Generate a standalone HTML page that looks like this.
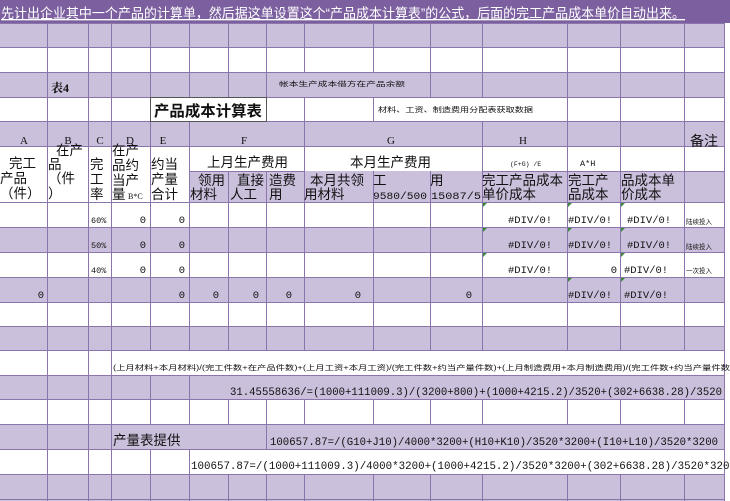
<!DOCTYPE html>
<html><head><meta charset="utf-8"><style>
html,body{margin:0;padding:0;background:#fff;overflow:hidden}
svg{display:block}
text{font-family:"Liberation Sans","Noto Sans CJK SC",sans-serif;fill:#111}
.m,.m text{font-family:"Liberation Mono","Noto Sans CJK SC",monospace}
.s,.s text{font-family:"Liberation Serif","Noto Serif CJK SC",serif}
</style></head><body>
<svg width="730" height="501" viewBox="0 0 730 501" xmlns="http://www.w3.org/2000/svg">
<rect x="0" y="0" width="730" height="501" fill="#fff"/>
<rect x="0" y="0" width="730" height="23" fill="#7b5f9f"/>
<text x="1" y="18" font-size="13.5" style="fill:#fff" text-decoration="underline" textLength="684" lengthAdjust="spacingAndGlyphs">先计出企业其中一个产品的计算单，然后据这单设置这个“产品成本计算表”的公式，后面的完工产品成本单价自动出来。</text>
<g fill="#cbc0dc">
<rect x="0" y="23" width="725" height="24"/>
<rect x="0" y="72" width="725" height="25"/>
<rect x="0" y="121" width="725" height="25"/>
<rect x="189" y="171" width="536" height="31"/>
<rect x="0" y="227" width="725" height="25"/>
<rect x="0" y="277" width="725" height="25"/>
<rect x="0" y="326" width="725" height="24"/>
<rect x="0" y="375" width="725" height="24"/>
<rect x="0" y="424" width="725" height="25"/>
<rect x="0" y="474" width="725" height="27"/>
</g>
<g stroke="#8a76ad" stroke-width="1">
<line x1="0" y1="23.5" x2="725" y2="23.5"/>
<line x1="0" y1="47.5" x2="725" y2="47.5"/>
<line x1="0" y1="72.5" x2="725" y2="72.5"/>
<line x1="0" y1="97.5" x2="725" y2="97.5"/>
<line x1="0" y1="121.5" x2="725" y2="121.5"/>
<line x1="0" y1="146.5" x2="725" y2="146.5"/>
<line x1="189" y1="171.5" x2="304" y2="171.5"/>
<line x1="482" y1="171.5" x2="725" y2="171.5"/>
<line x1="0" y1="202.5" x2="725" y2="202.5"/>
<line x1="0" y1="227.5" x2="725" y2="227.5"/>
<line x1="0" y1="252.5" x2="725" y2="252.5"/>
<line x1="0" y1="277.5" x2="725" y2="277.5"/>
<line x1="0" y1="302.5" x2="725" y2="302.5"/>
<line x1="0" y1="326.5" x2="725" y2="326.5"/>
<line x1="0" y1="350.5" x2="725" y2="350.5"/>
<line x1="0" y1="375.5" x2="725" y2="375.5"/>
<line x1="0" y1="399.5" x2="725" y2="399.5"/>
<line x1="0" y1="424.5" x2="725" y2="424.5"/>
<line x1="0" y1="449.5" x2="725" y2="449.5"/>
<line x1="0" y1="474.5" x2="725" y2="474.5"/>
<line x1="0" y1="499.5" x2="725" y2="499.5"/>
</g>
<g stroke="#8a76ad" stroke-width="1">
<line x1="47.5" y1="23" x2="47.5" y2="501"/>
<line x1="88.5" y1="23" x2="88.5" y2="501"/>
<line x1="111.5" y1="23" x2="111.5" y2="501"/>
<line x1="150.5" y1="23" x2="150.5" y2="97"/><line x1="150.5" y1="121" x2="150.5" y2="351"/><line x1="150.5" y1="375" x2="150.5" y2="425"/><line x1="150.5" y1="449" x2="150.5" y2="501"/>
<line x1="189.5" y1="23" x2="189.5" y2="97"/><line x1="189.5" y1="121" x2="189.5" y2="351"/><line x1="189.5" y1="375" x2="189.5" y2="425"/><line x1="189.5" y1="449" x2="189.5" y2="501"/>
<line x1="228.5" y1="23" x2="228.5" y2="97"/><line x1="228.5" y1="171" x2="228.5" y2="351"/><line x1="228.5" y1="399" x2="228.5" y2="425"/><line x1="228.5" y1="474" x2="228.5" y2="501"/>
<line x1="266.5" y1="23" x2="266.5" y2="121"/><line x1="266.5" y1="171" x2="266.5" y2="351"/><line x1="266.5" y1="399" x2="266.5" y2="449"/><line x1="266.5" y1="474" x2="266.5" y2="501"/>
<line x1="304.5" y1="23" x2="304.5" y2="72"/><line x1="304.5" y1="97" x2="304.5" y2="351"/><line x1="304.5" y1="399" x2="304.5" y2="425"/><line x1="304.5" y1="474" x2="304.5" y2="501"/>
<line x1="373.5" y1="23" x2="373.5" y2="72"/><line x1="373.5" y1="97" x2="373.5" y2="121"/><line x1="373.5" y1="171" x2="373.5" y2="351"/><line x1="373.5" y1="399" x2="373.5" y2="425"/><line x1="373.5" y1="474" x2="373.5" y2="501"/>
<line x1="430.5" y1="23" x2="430.5" y2="97"/><line x1="430.5" y1="171" x2="430.5" y2="351"/><line x1="430.5" y1="399" x2="430.5" y2="425"/><line x1="430.5" y1="474" x2="430.5" y2="501"/>
<line x1="482.5" y1="23" x2="482.5" y2="97"/><line x1="482.5" y1="121" x2="482.5" y2="351"/><line x1="482.5" y1="399" x2="482.5" y2="425"/><line x1="482.5" y1="474" x2="482.5" y2="501"/>
<line x1="567.5" y1="23" x2="567.5" y2="351"/><line x1="567.5" y1="399" x2="567.5" y2="425"/><line x1="567.5" y1="474" x2="567.5" y2="501"/>
<line x1="620.5" y1="23" x2="620.5" y2="351"/><line x1="620.5" y1="399" x2="620.5" y2="425"/><line x1="620.5" y1="474" x2="620.5" y2="501"/>
<line x1="684.5" y1="23" x2="684.5" y2="351"/><line x1="684.5" y1="399" x2="684.5" y2="425"/><line x1="684.5" y1="474" x2="684.5" y2="501"/>
<line x1="724.5" y1="23" x2="724.5" y2="501"/>
</g>
<text x="51" y="92" font-size="12" font-weight="bold" class="s">表4</text>
<text x="279" y="86" font-size="6.5" textLength="126" lengthAdjust="spacingAndGlyphs">帐本生产成本借方在产品余额</text>
<rect x="150.5" y="97.5" width="116" height="24" fill="#fff" stroke="#555"/>
<text x="154" y="116" font-size="15" font-weight="bold" textLength="108" lengthAdjust="spacingAndGlyphs">产品成本计算表</text>
<text x="378" y="112" font-size="7" textLength="155" lengthAdjust="spacingAndGlyphs">材料、工资、制造费用分配表获取数据</text>
<g font-size="11" text-anchor="middle" class="s">
<text x="24" y="144">A</text><text x="68" y="144">B</text><text x="100" y="144">C</text>
<text x="130" y="144">D</text><text x="163" y="144">E</text><text x="244" y="144">F</text>
<text x="391" y="144">G</text><text x="523" y="144">H</text>
</g>
<text x="690" y="146" font-size="14">备注</text>
<g font-size="13.5">
<text x="9" y="168">完工</text><text x="0" y="183">产品</text><text x="0" y="198">（件）</text>
<text x="56" y="155">在产</text><text x="48" y="169">品</text><text x="48" y="183">（件</text><text x="48" y="198">）</text>
<text x="90" y="169">完</text><text x="90" y="184">工</text><text x="90" y="199">率</text>
<text x="112" y="155">在产</text><text x="112" y="170">品约</text><text x="112" y="185">当产</text><text x="112" y="199">量</text>
<text x="151" y="169">约当</text><text x="151" y="184">产量</text><text x="151" y="199">合计</text>
<text x="207" y="167">上月生产费用</text>
<text x="350" y="167">本月生产费用</text>
<text x="198" y="185">领用</text><text x="190" y="199">材料</text>
<text x="237" y="185">直接</text><text x="230" y="199">人工</text>
<text x="269" y="185">造费</text><text x="269" y="199">用</text>
<text x="310" y="185">本月共领</text><text x="304" y="199">用材料</text>
<text x="373" y="185">工</text><text x="430" y="185">用</text>
<text x="482" y="185">完工产品成本</text><text x="482" y="199">单价成本</text>
<text x="568" y="185">完工产</text><text x="568" y="199">品成本</text>
<text x="621" y="185">品成本单</text><text x="621" y="199">价成本</text>
</g>
<text x="128" y="199" font-size="8" class="s">B*C</text>
<text x="373" y="199" font-size="10.5" class="m" textLength="54" lengthAdjust="spacingAndGlyphs">9580/500</text>
<text x="431" y="199" font-size="10.5" class="m" textLength="50" lengthAdjust="spacingAndGlyphs">15087/5</text>
<text x="510" y="166" font-size="6.5" class="m">(F+G) /E</text>
<text x="580" y="166" font-size="8.5" class="m">A*H</text>
<g font-size="10.5" class="m">
<text x="91" y="223" font-size="8.5">60%</text><text x="91" y="248" font-size="8.5">50%</text><text x="91" y="273" font-size="8.5">40%</text>
<text x="146" y="223" text-anchor="end">0</text><text x="185" y="223" text-anchor="end">0</text>
<text x="146" y="248" text-anchor="end">0</text><text x="185" y="248" text-anchor="end">0</text>
<text x="146" y="273" text-anchor="end">0</text><text x="185" y="273" text-anchor="end">0</text>
<text x="44" y="298" text-anchor="end">0</text><text x="185" y="298" text-anchor="end">0</text>
<text x="219" y="298" text-anchor="end">0</text><text x="259" y="298" text-anchor="end">0</text><text x="292" y="298" text-anchor="end">0</text>
<text x="361" y="298" text-anchor="end">0</text><text x="472" y="298" text-anchor="end">0</text>
<text x="508" y="223">#DIV/0!</text><text x="568" y="223">#DIV/0!</text><text x="627" y="223">#DIV/0!</text>
<text x="508" y="248">#DIV/0!</text><text x="568" y="248">#DIV/0!</text><text x="627" y="248">#DIV/0!</text>
<text x="508" y="273">#DIV/0!</text><text x="617" y="273" text-anchor="end">0</text><text x="624" y="273">#DIV/0!</text>
<text x="568" y="298">#DIV/0!</text><text x="624" y="298">#DIV/0!</text>
</g>
<g font-size="6.5">
<text x="686" y="224">陆续投入</text><text x="686" y="249">陆续投入</text><text x="686" y="273">一次投入</text>
</g>
<g fill="#3a8a3a">
<polygon points="483,203 487,203 483,207"/><polygon points="568,203 572,203 568,207"/><polygon points="621,203 625,203 621,207"/>
<polygon points="483,228 487,228 483,232"/><polygon points="568,228 572,228 568,232"/><polygon points="621,228 625,228 621,232"/>
<polygon points="483,253 487,253 483,257"/><polygon points="621,253 625,253 621,257"/>
<polygon points="568,278 572,278 568,282"/><polygon points="621,278 625,278 621,282"/>
</g>
<text x="113" y="370" font-size="7" textLength="617" lengthAdjust="spacingAndGlyphs">(上月材料+本月材料)/(完工件数+在产品件数)+(上月工资+本月工资)/(完工件数+约当产量件数)+(上月制造费用+本月制造费用)/(完工件数+约当产量件数</text>
<text x="230" y="395" font-size="11" class="m" textLength="492" lengthAdjust="spacingAndGlyphs">31.45558636/=(1000+111009.3)/(3200+800)+(1000+4215.2)/3520+(302+6638.28)/3520</text>
<text x="113" y="445" font-size="13.5">产量表提供</text>
<text x="270" y="445" font-size="11" class="m" textLength="448" lengthAdjust="spacingAndGlyphs">100657.87=/(G10+J10)/4000*3200+(H10+K10)/3520*3200+(I10+L10)/3520*3200</text>
<text x="191" y="469" font-size="11" class="m" textLength="545" lengthAdjust="spacingAndGlyphs">100657.87=/(1000+111009.3)/4000*3200+(1000+4215.2)/3520*3200+(302+6638.28)/3520*3200</text>
</svg>
</body></html>
